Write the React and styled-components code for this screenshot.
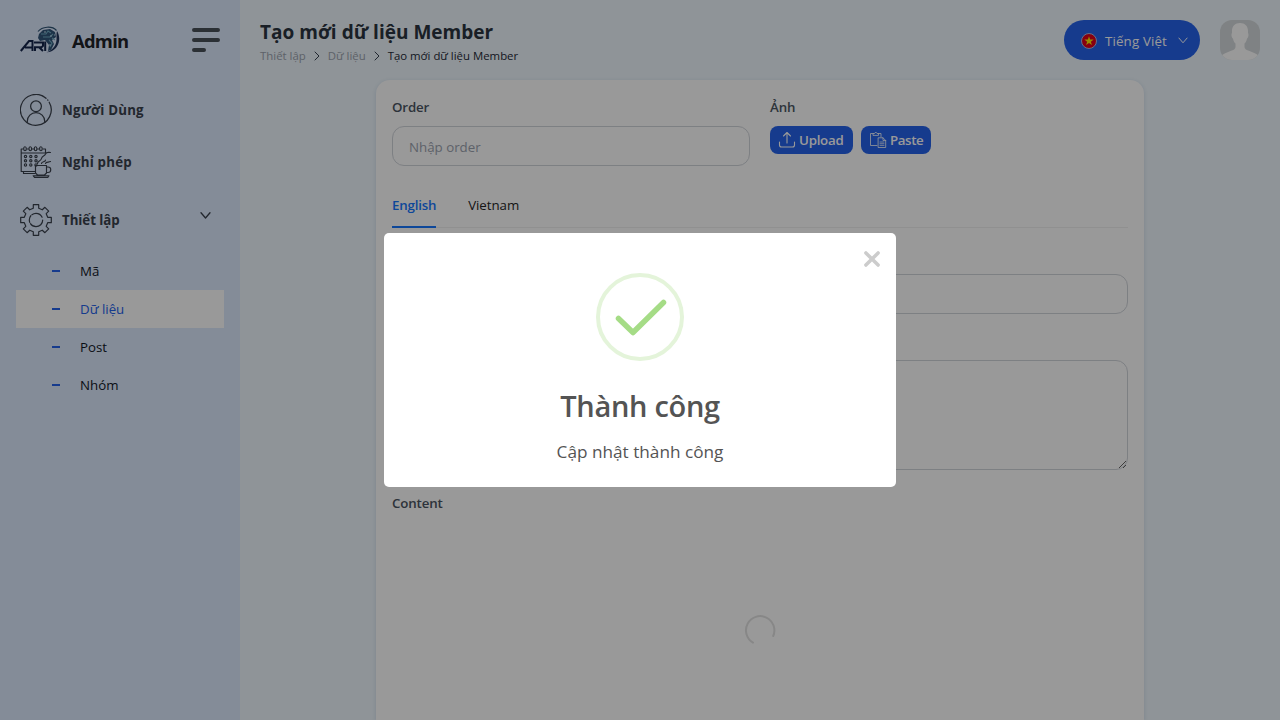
import React from "react";
import styled, { createGlobalStyle, css } from "styled-components";

const GlobalStyle = createGlobalStyle`
  *, *::before, *::after { box-sizing: border-box; }
  html, body, #root { height: 100%; }
  body {
    margin: 0;
    overflow: hidden;
    font-family: "Open Sans", "Noto Sans", sans-serif;
    font-size: 13.3px;
    color: #2b3440;
  }
  button, input, textarea { font: inherit; }
  svg { display: block; flex: none; }
`;

const Page = styled.div`
  display: flex;
  height: 720px;
  background: #eef7fd;
`;

/* Sidebar */
const Sidebar = styled.aside`
  width: 240px;
  flex: none;
  background: #dde9fe;
`;
const Brand = styled.div`
  display: flex;
  align-items: center;
  height: 80px;
  padding: 0 20px;
`;
const BrandName = styled.span`
  flex: 1;
  margin-left: 12px;
  font-size: 18.4px;
  font-weight: 700;
  letter-spacing: -0.75px;
  color: #1f2329;
`;
const MenuItem = styled.a`
  display: flex;
  align-items: center;
  height: ${(p) => p.$height || 52}px;
  padding: 0 29px 0 20px;
  color: #3a424d;
`;
const MenuLabel = styled.span`
  flex: 1;
  margin-left: 10px;
  font-weight: 700;
  letter-spacing: ${(p) => p.$spacing || 0}px;
`;
const MenuChevron = styled.span`
  margin-bottom: 10px;
`;
const Nav = styled.nav`
  padding-top: 4px;
`;
const SubMenu = styled.div`
  padding: 0 16px;
`;
const SubItem = styled.a`
  display: flex;
  align-items: center;
  height: 38px;
  padding-left: 36px;
  background: ${(p) => (p.$active ? "#fff" : "transparent")};
  color: ${(p) => (p.$active ? "#2563eb" : "#111827")};
  &::before {
    content: "";
    width: 8px;
    height: 2px;
    margin-right: 20px;
    background: #2563eb;
  }
`;

/* Header */
const Main = styled.main`
  flex: 1;
  min-width: 0;
`;
const Header = styled.header`
  display: flex;
  align-items: center;
  height: 80px;
  padding: 0 20px;
`;
const Heading = styled.div`
  flex: 1;
  padding-top: 3px;
`;
const Title = styled.h1`
  margin: 0;
  font-size: 19px;
  line-height: 28px;
  font-weight: 700;
  letter-spacing: 0.02px;
`;
const Crumbs = styled.div`
  display: flex;
  align-items: center;
  height: 19px;
  font-size: 11.4px;
  color: #9ca3af;
  svg { margin: 1px 6px 0; color: #374151; }
`;
const Crumb = styled.span`
  ${(p) => p.$current && css`color: #1f2937;`}
`;
const LanguageButton = styled.button`
  display: flex;
  align-items: center;
  width: 136px;
  height: 40px;
  padding: 1px 12px 0 17px;
  border: 0;
  border-radius: 20px;
  background: #2563eb;
  color: #fff;
  span { flex: 1; margin-left: 8px; text-align: left; letter-spacing: 0.15px; }
`;
const Avatar = styled.div`
  width: 40px;
  height: 40px;
  margin-left: 20px;
  border-radius: 12px;
  overflow: hidden;
`;

/* Form */
const Card = styled.section`
  width: 768px;
  height: 640px;
  margin: 0 auto;
  padding: 16px;
  border-radius: 14px 14px 0 0;
  background: #fff;
  box-shadow: 0 1px 4px rgba(30, 58, 138, 0.14);
`;
const Columns = styled.div`
  display: grid;
  grid-template-columns: 1fr 1fr;
  gap: 20px;
`;
const Label = styled.label`
  display: block;
  height: 22px;
  margin-bottom: 8px;
  line-height: 22px;
  font-weight: 600;
  letter-spacing: -0.15px;
  color: #4b5563;
`;
const controlStyle = css`
  display: block;
  width: 100%;
  border: 1px solid #d1d5db;
  border-radius: 12px;
  background: #fff;
  outline: none;
`;
const Input = styled.input`
  ${controlStyle}
  height: 40px;
  padding: 1px 16px 0;
  &::placeholder { color: #9ca3af; opacity: 1; }
`;
const TextArea = styled.textarea`
  ${controlStyle}
  height: 110px;
`;
const Actions = styled.div`
  display: flex;
  gap: 8px;
`;
const ActionButton = styled.button`
  display: flex;
  align-items: center;
  gap: 3px;
  width: ${(p) => p.$width}px;
  height: 28px;
  padding: 0 0 0 8px;
  border: 0;
  border-radius: 8px;
  background: #2563eb;
  color: #fff;
  font-weight: 600;
  letter-spacing: ${(p) => p.$spacing}px;
`;
const Tabs = styled.div`
  display: flex;
  gap: 32px;
  height: 46px;
  margin: 16px 0 16px;
  border-bottom: 1px solid #f0f0f0;
`;
const Tab = styled.div`
  display: flex;
  align-items: center;
  height: 46px;
  padding-top: 2px;
  border-bottom: 2px solid ${(p) => (p.$active ? "#1677ff" : "transparent")};
  font-weight: ${(p) => (p.$active ? 600 : 400)};
  letter-spacing: ${(p) => p.$spacing}px;
  color: ${(p) => (p.$active ? "#1677ff" : "#262626")};
`;
const Field = styled.div`
  margin-bottom: ${(p) => p.$bottom || 16}px;
`;
const Loading = styled.div`
  display: flex;
  justify-content: center;
  padding-top: 92px;
`;

/* Dialog */
const Backdrop = styled.div`
  position: fixed;
  inset: 0;
  display: flex;
  align-items: center;
  justify-content: center;
  background: rgba(0, 0, 0, 0.4);
`;
const Dialog = styled.div`
  position: relative;
  display: flex;
  flex-direction: column;
  align-items: center;
  width: 512px;
  height: 254px;
  padding-top: 40px;
  border-radius: 5px;
  background: #fff;
  color: #545454;
`;
const CloseButton = styled.button`
  position: absolute;
  top: 18px;
  right: 16px;
  padding: 0;
  border: 0;
  background: none;
  color: #ccc;
`;
const DialogTitle = styled.h2`
  margin: 25px 0 0;
  font-size: 29px;
  line-height: 40px;
  font-weight: 600;
  letter-spacing: -0.3px;
`;
const DialogText = styled.p`
  margin: 12px 0 0;
  font-size: 17.2px;
  line-height: 27px;
`;

const Stroke = ({ w, h = w, box, sw = 1, children }) => (
  <svg width={w} height={h} viewBox={box || `0 0 ${w} ${h}`} fill="none" stroke="currentColor"
    strokeWidth={sw} strokeLinecap="round" strokeLinejoin="round">{children}</svg>
);

const Logo = () => (
  <svg width="40" height="28" viewBox="0 0 40 28" fill="none">
    <path d="M18 5.500C22 .5 32-.5 36.500 4.500" stroke="#2f5575" strokeWidth="1.2" />
    <path d="M37 5c4.500 7 2 17-6 20.500-1.500.6-3 .8-4.500.7 6-2 9.500-6.500 10-12 .2-3.500-.3-6.500.5-9.200z" fill="#22365c" />
    <path d="M19 8l4-4 7-1 5 3 1 5-4 3 2 4-3 6-3 1 1-6-4-5-5 1-2-3z" fill="#31557a" />
    <path d="M21 8h5l2-3 3 2M23 11h7l3-3M29 14l3 3-2 4M32 12l3 2" stroke="#6fa9c0" strokeWidth="1.1" />
    <path d="M24 6h2M30 10h2M29 19h2M34 9h1" stroke="#c1dced" />
    <path d="M.8 25L9 15h3.500V25M5 21.500h7.500M15 25v-3.800h6.500l1.500-1.400v-3.300h-9M19 21.200l4 3.800M25.200 15.500V25" stroke="#14264c" strokeWidth="2" />
  </svg>
);
const Burger = () => (
  <Stroke w={28} h={24} sw={4}><path d="M2 2h24M2 12h24M2 22h10" stroke="#495059" /></Stroke>
);
const UserIcon = () => (
  <Stroke w={32} sw={1.25}>
    <path d="M26.030 4.300A15.400 15.400 0 1 0 29.200 8.200M27.700 6l.2.200" />
    <circle cx="16" cy="12.300" r="5.400" />
    <path d="M7.300 28.300v-1a8.700 8.700 0 0 1 17.400 0v1" />
  </Stroke>
);
const LeaveIcon = () => (
  <Stroke w={32} sw={1.15}>
    <path d="M15 25.500H1.200V3h2M7 3h1.500M12.300 3h1.300M17.500 3h1.400M23 3h2.500v4M1.200 7h24.300M3.500 25.500v2H15" />
    {[5, 10.3, 15.6, 20.900].map((x) => <ellipse key={x} cx={x} cy="2.700" rx="1.300" ry="2" />)}
    {[10.500, 14.700, 18.900].map((y) => [5.500, 10.800, 16].map((x) => (
      <circle key={`${x}-${y}`} cx={x} cy={y} r="1.150" />
    )))}
    <path d="M15.500 19.500h11v7.500l-2 2h-7l-2-2zM26.500 21h1.500a2.500 2.500 0 0 1 0 5.500h-1.500M13.200 29.700h15.800l-1.200 1.600H14.500z" />
    <path d="M17.500 17.500c0-3 3.500-2 4-5s3-2 4-4.500 3-1.500 5-1.500M21.500 17.500c0-2.500 4-1 4-3.500" />
    <path d="M25.500 17.500c.5-2 3-1 5-2" />
  </Stroke>
);
const GearIcon = () => (
  <Stroke w={32} sw={1.2}>
    <path d="M13.300 .7h5.400v3.600l3.600 1.500 2.600-2.500 3.800 3.800-2.500 2.600 1.500 3.600h3.600v5.400h-3.600l-1.500 3.600 2.500 2.600-3.800 3.800-2.600-2.500-3.600 1.500v3.600h-5.400v-3.600l-3.600-1.500-2.600 2.500-3.800-3.800 2.500-2.600-1.500-3.600H.7v-5.400h3.600l1.500-3.600-2.500-2.600 3.800-3.800 2.600 2.500 3.600-1.500z" />
    <circle cx="16" cy="16" r="6.700" strokeDasharray="17 1.500 7 1.500 12 3.100" />
  </Stroke>
);
const Chevron = ({ w = 11, h = 7, sw = 1.3 }) => (
  <Stroke w={w} h={h} box="0 0 11 7" sw={sw}><path d="M1 .8l4.500 5.200L10 .8" /></Stroke>
);
const CrumbArrow = () => <Stroke w={10} sw={1}><path d="M3 1l4 4-4 4" /></Stroke>;
const Flag = () => (
  <svg width="16" height="16" viewBox="0 0 16 16">
    <circle cx="8" cy="8" r="7.500" fill="#e2001a" stroke="#a9b9e5" />
    <path d="M8 3.200l1.150 3.400h3.500L9.850 8.700l1.050 3.400L8 10l-2.900 2.100 1.050-3.400-2.800-2.100h3.500z" fill="#ffe600" />
  </svg>
);
const Person = () => (
  <svg width="40" height="40" viewBox="0 0 40 40">
    <path fill="#d4d9dc" d="M0 0h40v40H0z" />
    <path fill="#fff" d="M20 3c5 0 8 3 8 8v2c1 1 .5 5-1 5.500-.4 2.500-1.300 4-2.500 5V27c0 2 2 3 5 4 4 1.500 8 3 10.500 6v3H0v-3c2.500-3 6.500-4.500 10.500-6 3-1 5-2 5-4v-3.500c-1.200-1-2.100-2.500-2.500-5-1.500-.5-2-4.500-1-5.500v-2c0-5 3-8 8-8z" />
  </svg>
);
const UploadIcon = () => (
  <Stroke w={18} sw={1.1}>
    <path d="M1.500 11v3a2 2 0 0 0 2 2h11a2 2 0 0 0 2-2v-3M9 12V2M5.500 5L9 1.500 12.500 5" />
  </Stroke>
);
const PasteIcon = () => (
  <Stroke w={18} sw={0.8}>
    <path d="M8 14.500H1.500v-12H4M9.500 2.500h2.500V6M4 4V2.500h1.500L6.800 1l1.200 1.500h1.500V4z" />
    <path d="M9.500 6.800h4.500l2.700 2.700v7H9.500zM14 6.800v2.700h2.700" />
    <path d="M11 11h4M11 12.700h4M11 14.400h4" strokeWidth=".7" />
  </Stroke>
);
const Spinner = () => (
  <Stroke w={32} sw={2}><path d="M29.200 22A14.200 14.200 0 1 0 9 28.600" stroke="#e2e2e2" /></Stroke>
);
const SuccessIcon = () => (
  <Stroke w={88} sw={5.500}>
    <circle cx="44" cy="44" r="42" stroke="#e4f4da" strokeWidth="4" />
    <path d="M22.500 45.500L37 59.500 67.500 29.500" stroke="#a5dc86" />
  </Stroke>
);
const CloseIcon = () => <Stroke w={16} sw={3.500}><path d="M1.900 1.900l12.200 12.200M14.100 1.900L1.900 14.100" /></Stroke>;

const pages = [
  { name: "Mã" },
  { name: "Dữ liệu", active: true },
  { name: "Post" },
  { name: "Nhóm" },
];

export default function App() {
  return (
    <>
      <GlobalStyle />
      <Page>
        <Sidebar>
          <Brand><Logo /><BrandName>Admin</BrandName><Burger /></Brand>
          <Nav>
            <MenuItem><UserIcon /><MenuLabel $spacing={0.2}>Người Dùng</MenuLabel></MenuItem>
            <MenuItem><LeaveIcon /><MenuLabel $spacing={0.2}>Nghỉ phép</MenuLabel></MenuItem>
            <MenuItem $height={64}>
              <GearIcon /><MenuLabel $spacing={-0.05}>Thiết lập</MenuLabel>
              <MenuChevron><Chevron /></MenuChevron>
            </MenuItem>
          </Nav>
          <SubMenu>
            {pages.map((p) => <SubItem key={p.name} $active={p.active}>{p.name}</SubItem>)}
          </SubMenu>
        </Sidebar>
        <Main>
          <Header>
            <Heading>
              <Title>Tạo mới dữ liệu Member</Title>
              <Crumbs>
                <Crumb>Thiết lập</Crumb><CrumbArrow />
                <Crumb>Dữ liệu</Crumb><CrumbArrow />
                <Crumb $current>Tạo mới dữ liệu Member</Crumb>
              </Crumbs>
            </Heading>
            <LanguageButton><Flag /><span>Tiếng Việt</span><Chevron w={10} h={7} sw={1.1} /></LanguageButton>
            <Avatar><Person /></Avatar>
          </Header>
          <Card>
            <Columns>
              <div><Label>Order</Label><Input placeholder="Nhập order" /></div>
              <div>
                <Label>Ảnh</Label>
                <Actions>
                  <ActionButton $width={83} $spacing={-0.25}><UploadIcon />Upload</ActionButton>
                  <ActionButton $width={70} $spacing={-0.4}><PasteIcon />Paste</ActionButton>
                </Actions>
              </div>
            </Columns>
            <Tabs>
              <Tab $active $spacing={-0.2}>English</Tab>
              <Tab $spacing={-0.05}>Vietnam</Tab>
            </Tabs>
            <Field><Label>Name</Label><Input /></Field>
            <Field $bottom={22}><Label>Description</Label><TextArea /></Field>
            <Label>Content</Label>
            <Loading><Spinner /></Loading>
          </Card>
        </Main>
      </Page>
      <Backdrop>
        <Dialog role="dialog">
          <CloseButton aria-label="Close"><CloseIcon /></CloseButton>
          <SuccessIcon />
          <DialogTitle>Thành công</DialogTitle>
          <DialogText>Cập nhật thành công</DialogText>
        </Dialog>
      </Backdrop>
    </>
  );
}
